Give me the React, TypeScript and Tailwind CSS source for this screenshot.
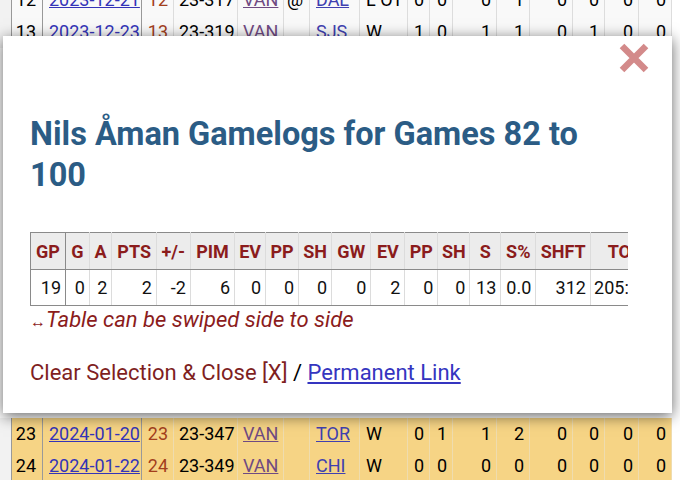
import React from 'react'

type BgRow = {
  rk: string
  date: string
  gm: string
  id: string
  tm: string
  at: string
  opp: string
  res: string
  nums: string[]
}

const topRows: BgRow[] = [
  { rk: '12', date: '2023-12-21', gm: '12', id: '23-317', tm: 'VAN', at: '@', opp: 'DAL', res: 'L OT', nums: ['0', '0', '0', '1', '0', '0', '0', '0'] },
  { rk: '13', date: '2023-12-23', gm: '13', id: '23-319', tm: 'VAN', at: '', opp: 'SJS', res: 'W', nums: ['1', '0', '1', '1', '0', '1', '0', '0'] },
]

const bottomRows: BgRow[] = [
  { rk: '23', date: '2024-01-20', gm: '23', id: '23-347', tm: 'VAN', at: '', opp: 'TOR', res: 'W', nums: ['0', '1', '1', '2', '0', '0', '0', '0'] },
  { rk: '24', date: '2024-01-22', gm: '24', id: '23-349', tm: 'VAN', at: '', opp: 'CHI', res: 'W', nums: ['0', '0', '0', '0', '0', '0', '0', '0'] },
]

const numWidths = ['w-[22px]', 'w-[23px]', 'w-[44px]', 'w-[33px]', 'w-[43px]', 'w-[32px]', 'w-[34px]', 'w-[33px]']

function BackgroundRow({ row, yellow }: { row: BgRow; yellow?: boolean }) {
  const bg = yellow ? 'bg-[#f6d485]' : 'bg-[#f9f9f9]'
  const line = yellow ? 'border-[#efdcae]' : 'border-[#dddddd]'
  return (
    <div className="flex h-8 text-[18px] leading-8">
      <div className="w-[11px] bg-[#f2f2f2]" />
      <div className={`flex ${bg} border-l border-[#999]`}>
        <div className="w-[31px] pr-[6px] text-right text-black border-r border-[#999]">{row.rk}</div>
        <div className="w-[99px] pl-[6px] text-[#3434b8] underline border-r border-[#999]">{row.date}</div>
        <div className={`w-[32px] pr-[5px] text-right text-[#a33f1c] border-r ${line}`}>{row.gm}</div>
        <div className={`w-[64px] pl-[5px] text-black border-r ${line}`}>{row.id}</div>
        <div className={`w-[46px] pl-[5px] text-[#6f4a82] underline border-r ${line}`}>{row.tm}</div>
        <div className={`w-[26px] pl-[3px] text-black border-r ${line}`}>{row.at}</div>
        <div className={`w-[50px] pl-[6px] text-[#4040b0] underline border-r ${line}`}>{row.opp}</div>
        <div className={`w-[48px] pl-[6px] text-black border-r ${line}`}>{row.res}</div>
        {row.nums.map((n, i) => (
          <div key={i} className={`${numWidths[i]} pr-[5px] text-right text-black border-r ${line}`}>
            {n}
          </div>
        ))}
      </div>
    </div>
  )
}

const headers = ['GP', 'G', 'A', 'PTS', '+/-', 'PIM', 'EV', 'PP', 'SH', 'GW', 'EV', 'PP', 'SH', 'S', 'S%', 'SHFT', 'TOI']
const values = ['19', '0', '2', '2', '-2', '6', '0', '0', '0', '0', '2', '0', '0', '13', '0.0', '312', '205:47']
const colWidths = [
  'w-[34px]', 'w-[23px]', 'w-[22px]', 'w-[43px]', 'w-[33px]', 'w-[43px]', 'w-[30px]', 'w-[32px]', 'w-[32px]',
  'w-[38px]', 'w-[33px]', 'w-[32px]', 'w-[31px]', 'w-[30px]', 'w-[34px]', 'w-[53px]', 'w-[61px]',
]

function CloseIcon() {
  return (
    <svg width="30" height="30" viewBox="0 0 30 30">
      <path d="M3 3 L27 27 M27 3 L3 27" stroke="#d38a8a" strokeWidth="6.5" strokeLinecap="butt" />
    </svg>
  )
}

export default function App() {
  return (
    <div className="relative w-[680px] h-[480px] overflow-hidden bg-white font-['Roboto','Liberation_Sans',sans-serif]">
      <div className="-mt-4 flex flex-col">
        {topRows.map((r) => (
          <BackgroundRow key={r.rk} row={r} />
        ))}
        <div className="h-[370px]" />
        {bottomRows.map((r) => (
          <BackgroundRow key={r.rk} row={r} yellow />
        ))}
      </div>

      <div className="absolute left-[3px] top-[36px] w-[669px] h-[377px] bg-white shadow-[0_3px_14px_rgba(0,0,0,0.6)] pl-[27px] pr-[23px]">
        <div className="flex justify-end pt-[7px] h-[78px]">
          <CloseIcon />
        </div>
        <h2 className="text-[32.5px] leading-[41px] font-bold text-[#2b5c85] pr-[40px]">
          Nils Åman Gamelogs for Games 82 to 100
        </h2>
        <div className="mt-[36px] w-[598px] overflow-hidden">
          <table className="border-collapse table-fixed w-[624px] text-[18px]">
            <thead>
              <tr className="h-[37px] bg-[#ececec]">
                {headers.map((h, i) => (
                  <th
                    key={i}
                    className={`${colWidths[i]} p-0 text-center font-bold text-[#8b1c1c] border-t border-b border-[#8a8a8a] ${
                      i === 0 ? 'border-l border-r border-r-[#8a8a8a]' : 'border-r border-r-[#dcdcdc]'
                    }`}
                  >
                    {h}
                  </th>
                ))}
              </tr>
            </thead>
            <tbody>
              <tr className="h-[36px]">
                {values.map((v, i) => (
                  <td
                    key={i}
                    className={`p-0 pr-[4px] text-right text-[#111] border-b border-[#8a8a8a] ${
                      i === 0 ? 'border-l border-r border-r-[#8a8a8a]' : 'border-r border-r-[#dcdcdc]'
                    }`}
                  >
                    {v}
                  </td>
                ))}
              </tr>
            </tbody>
          </table>
        </div>
        <p className="text-[22px] leading-[28px] italic text-[#8b1c1c]">
          <span className="not-italic text-[16px]">↔</span>Table can be swiped side to side
        </p>
        <p className="mt-[23px] text-[22px] leading-[28px] text-[#7f1f1f]">
          Clear Selection &amp; Close [X] <span className="text-black">/</span>{' '}
          <a className="text-[#3535c0] underline">Permanent Link</a>
        </p>
      </div>
    </div>
  )
}
